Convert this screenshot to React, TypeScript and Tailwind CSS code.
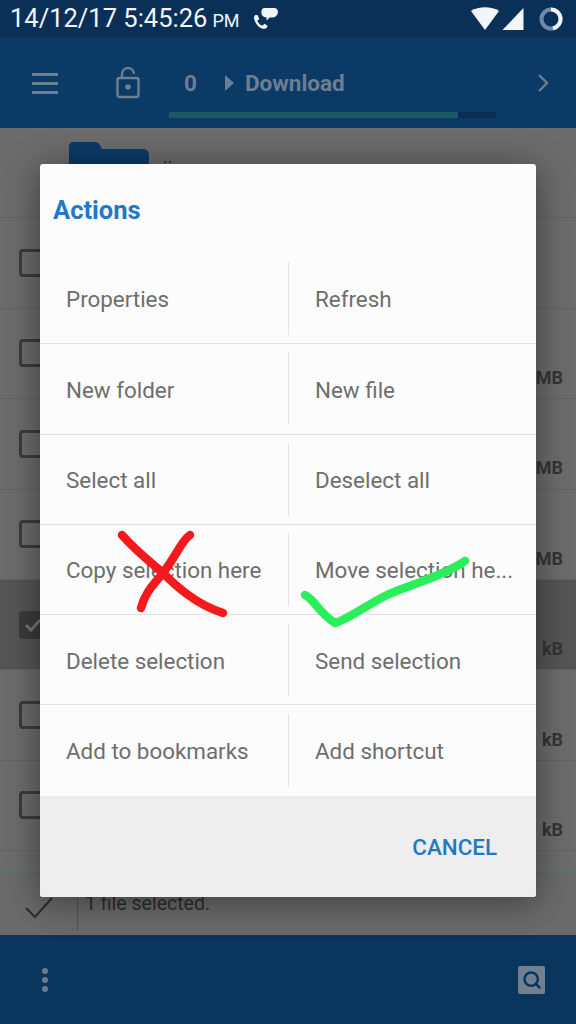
import { Search } from 'lucide-react'

const actions = [
  ['Properties', 'Refresh'],
  ['New folder', 'New file'],
  ['Select all', 'Deselect all'],
  ['Copy selection here', 'Move selection he...'],
  ['Delete selection', 'Send selection'],
  ['Add to bookmarks', 'Add shortcut'],
]

const rows = [
  { size: '' },
  { size: 'MB' },
  { size: 'MB' },
  { size: 'MB' },
  { size: 'kB', selected: true },
  { size: 'kB' },
  { size: 'kB' },
]

function StatusBar() {
  return (
    <div className="flex h-[38px] items-center justify-between bg-[#0a3058] pl-[10px] pr-[13px] text-[#f2f5f8]">
      <div className="flex items-center">
        <span className="text-[25.5px] leading-none">14/12/17 5:45:26</span>
        <span className="ml-[5px] mt-[4px] text-[18px] leading-none">PM</span>
        <svg viewBox="0 0 26 26" className="ml-[13px] h-[27px] w-[27px]" fill="currentColor">
          <path d="M12 2h9c3 0 4 2 4 4s-2 5-5 5h-3l-3 3v-3c-3 0-5-2-5-5 0-2 1-4 3-4z" />
          <path d="M3 9c2-1 3 0 3 1l1 3-2 1c1 2 2 4 5 5l2-2 3 2c0 2-2 3-3 3-5 0-9-5-10-10 0-1 0-2 1-3z" />
        </svg>
      </div>
      <div className="flex items-center">
        <svg viewBox="0 0 30 24" className="h-[24px] w-[28px]" fill="currentColor" preserveAspectRatio="none">
          <path d="M0 4C8-1 22-1 30 4L15 23z" />
        </svg>
        <svg viewBox="0 0 22 24" className="ml-[3px] h-[24px] w-[23px]" fill="currentColor">
          <path d="M21 1v22H0z" />
        </svg>
        <svg viewBox="0 0 24 24" className="ml-[14px] h-[24px] w-[24px]" fill="none" strokeWidth="4">
          <circle cx="12" cy="12" r="9.5" stroke="#6f8aa6" />
          <path d="M12 2.5a9.5 9.5 0 0 1 2 18.8" stroke="#f2f5f8" />
        </svg>
      </div>
    </div>
  )
}

function Toolbar() {
  return (
    <div className="relative flex h-[90px] items-center bg-[#0b3a66] text-[#6b7f92]">
      <div className="ml-[32px] flex w-[26px] flex-col gap-[6px]">
        <div className="h-[3px] bg-[#6b7f92]" />
        <div className="h-[3px] bg-[#6b7f92]" />
        <div className="h-[3px] bg-[#6b7f92]" />
      </div>
      <svg viewBox="0 0 24 32" className="ml-[58px] h-[32px] w-[24px]" fill="none" stroke="currentColor" strokeWidth="2.4">
        <rect x="1.5" y="11" width="21" height="19" rx="2" />
        <path d="M6 11V7a6 6 0 0 1 12 0" />
        <circle cx="12" cy="20" r="1.6" fill="currentColor" />
      </svg>
      <span className="ml-[44px] text-[22.5px] font-bold leading-none">0</span>
      <svg viewBox="0 0 10 16" className="ml-[27px] h-[16px] w-[10px]" fill="currentColor">
        <path d="M1 0l9 8-9 8z" />
      </svg>
      <span className="ml-[11px] text-[22.5px] font-bold leading-none">Download</span>
      <svg viewBox="0 0 12 20" className="absolute left-[537px] top-[35px] h-[20px] w-[12px]" fill="none" stroke="currentColor" strokeWidth="2.4">
        <path d="M2 2l8 8-8 8" />
      </svg>
      <div className="absolute bottom-[10px] left-[169px] flex h-[6px] w-[327px]">
        <div className="w-[289px] bg-[#1d5666]" />
        <div className="flex-1 bg-[#0a2f55]" />
      </div>
    </div>
  )
}

function FileRow({ size, selected }: { size: string; selected?: boolean }) {
  return (
    <div className={`flex h-[90.4px] items-center justify-between border-b border-[#626262] pl-[19px] pr-[13px] ${selected ? 'bg-[#555555]' : ''}`}>
      <div className={`flex h-[28px] w-[28px] items-center justify-center rounded-[4px] border-[3px] border-[#3b3b3b] ${selected ? 'bg-[#3b3b3b]' : ''}`}>
        {selected && (
          <svg viewBox="0 0 20 20" className="h-[20px] w-[20px]" fill="none" stroke="#777777" strokeWidth="3">
            <path d="M3 10l5 5 9-10" />
          </svg>
        )}
      </div>
      <span className="mt-[48px] text-[18px] font-bold text-[#353535]">{size}</span>
    </div>
  )
}

function ActionsDialog() {
  return (
    <div className="absolute left-[40px] top-[164px] w-[496px] overflow-hidden rounded-[3px] bg-[#fcfcfc] shadow-[0_4px_36px_rgba(0,0,0,0.45)]">
      <div className="flex h-[90px] items-center pl-[13px] pt-[3px] text-[25.5px] font-bold leading-none text-[#1f78c8]">
        Actions
      </div>
      {actions.map(([left, right], i) => (
        <div key={left} className={`grid h-[90.3px] grid-cols-2 items-center ${i < actions.length - 1 ? 'border-b border-[#e2e2e2]' : ''}`}>
          <div className="whitespace-nowrap pl-[26px] pt-[3px] text-[22.4px] text-[#6e6e6e]">{left}</div>
          <div className="flex h-[73px] items-center border-l border-[#e2e2e2] pl-[26px] pt-[3px]">
            <span className="whitespace-nowrap text-[22.4px] text-[#6e6e6e]">{right}</span>
          </div>
        </div>
      ))}
      <div className="flex h-[101px] items-center justify-end bg-[#eeeeee] pr-[39px] pt-[1px]">
        <span className="text-[22.4px] font-medium leading-none text-[#1f78c8]">CANCEL</span>
      </div>
    </div>
  )
}

export default function App() {
  return (
    <div className="relative flex h-[1024px] w-[576px] flex-col overflow-hidden bg-[#6c6c6c] font-['Roboto',sans-serif]">
      <StatusBar />
      <Toolbar />

      {/* Dimmed file list behind the dialog */}
      <div className="h-[742px] shrink-0">
        <div className="flex h-[90.4px] border-b border-[#626262] pl-[69px] pt-[14px]">
          <svg viewBox="0 0 80 40" className="h-[40px] w-[80px]" fill="#0b3a66">
            <path d="M4 0h22c3 0 5 2 7 7h41c3 0 6 2 6 6v27H0V4c0-2 2-4 4-4z" />
          </svg>
          <span className="ml-[14px] mt-[6px] text-[18px] leading-none text-[#2e2e2e]">..</span>
        </div>
        {rows.map((row, i) => (
          <FileRow key={i} size={row.size} selected={row.selected} />
        ))}
      </div>

      <div className="absolute left-0 top-[870px] flex h-[65px] w-full items-center border-t border-[#5e7a86] bg-[#6a6a6a]">
        <svg viewBox="0 0 28 22" className="ml-[25px] mt-[10px] h-[22px] w-[28px]" fill="none" stroke="#2c2c2c" strokeWidth="2">
          <path d="M1 11l9 9L27 1" />
        </svg>
        <div className="ml-[24px] h-[56px] w-px bg-[#555555]" />
        <span className="ml-[7px] mt-[2px] text-[19.5px] text-[#2e2e2e]">1 file selected.</span>
      </div>

      <div className="absolute bottom-0 left-0 flex h-[89px] w-full items-center justify-between bg-[#0a365e] pl-[42px] pr-[31px]">
        <div className="flex flex-col gap-[3px]">
          <div className="h-[6px] w-[6px] rounded-full bg-[#6b7f92]" />
          <div className="h-[6px] w-[6px] rounded-full bg-[#6b7f92]" />
          <div className="h-[6px] w-[6px] rounded-full bg-[#6b7f92]" />
        </div>
        <div className="flex h-[28px] w-[27px] items-center justify-center rounded-[2px] bg-[#71808f]">
          <Search className="h-[20px] w-[20px] text-[#0a365e]" strokeWidth={3} />
        </div>
      </div>

      <ActionsDialog />

      {/* Hand-drawn marks on top of the screenshot */}
      <svg viewBox="0 0 576 1024" className="pointer-events-none absolute left-0 top-0 h-[1024px] w-[576px]" fill="none" strokeWidth="8.5" strokeLinecap="round" strokeLinejoin="round">
        <path d="M122 535C135 550 148 560 163 573C175 585 195 604 223 613" stroke="#f5191c" />
        <path d="M190 535C182 540 178 553 163 573C155 583 145 592 141 608" stroke="#f5191c" />
        <path d="M305 595C315 600 318 612 335 623C345 621 365 606 387 595C405 586 440 578 465 561" stroke="#2bee5b" />
      </svg>
    </div>
  )
}
